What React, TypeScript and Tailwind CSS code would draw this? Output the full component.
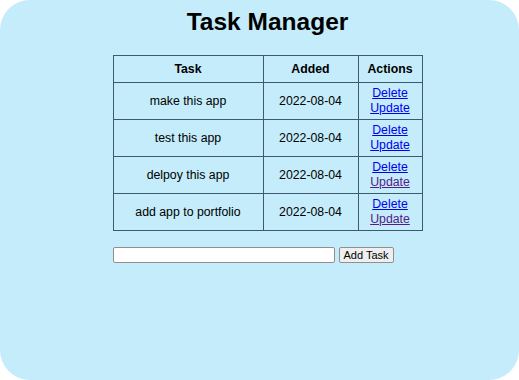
import React from 'react';

type Task = { name: string; added: string; visited: boolean };

const tasks: Task[] = [
  { name: 'make this app', added: '2022-08-04', visited: false },
  { name: 'test this app', added: '2022-08-04', visited: false },
  { name: 'delpoy this app', added: '2022-08-04', visited: true },
  { name: 'add app to portfolio', added: '2022-08-04', visited: true },
];

const App: React.FC = () => {
  return (
    <div className="w-[519px] h-[380px] bg-white">
      <div
        className="w-full h-full bg-[#c4ecfa] rounded-[30px] pl-4 flex flex-col items-center text-black"
        style={{ fontFamily: '"Liberation Sans", Arial, sans-serif' }}
      >
        <h1 className="text-[24.5px] font-bold leading-[28px] mt-[8px]">Task Manager</h1>

        <div className="mt-[19px] flex flex-col">
          <table className="border-collapse text-[12.3px] leading-[15px]">
            <thead>
              <tr className="h-[27px]">
                <th className="w-[150px] border border-[#3e5a70] font-bold">Task</th>
                <th className="w-[95px] border border-[#3e5a70] font-bold">Added</th>
                <th className="w-[64px] border border-[#3e5a70] font-bold">Actions</th>
              </tr>
            </thead>
            <tbody>
              {tasks.map((t) => (
                <tr key={t.name} className="h-[37px]">
                  <td className="border border-[#3e5a70] text-center">{t.name}</td>
                  <td className="border border-[#3e5a70] text-center">{t.added}</td>
                  <td className="border border-[#3e5a70] text-center">
                    <div className="flex flex-col items-center">
                      <a href="#" className="text-[#0000ee] underline">Delete</a>
                      <a
                        href="#"
                        className={t.visited ? 'text-[#551a8b] underline' : 'text-[#0000ee] underline'}
                      >
                        Update
                      </a>
                    </div>
                  </td>
                </tr>
              ))}
            </tbody>
          </table>

          <div className="mt-[16px] flex items-center gap-[4px]">
            <input
              type="text"
              className="w-[222px] h-[16px] bg-white border border-[#8f8f8f] rounded-[2px]"
            />
            <button className="h-[16px] px-[4px] bg-[#efefef] border border-[#8f8f8f] rounded-[2px] text-[11px] leading-[14px]">
              Add Task
            </button>
          </div>
        </div>
      </div>
    </div>
  );
};

export default App;
